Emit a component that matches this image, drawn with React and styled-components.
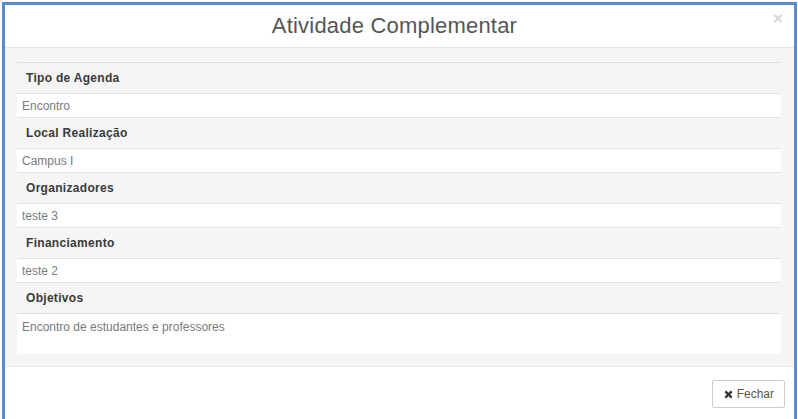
import styled, { createGlobalStyle } from "styled-components";

const Global = createGlobalStyle`
  html, body { margin: 0; padding: 0; background: #fff; }
  body { font-family: "Liberation Sans", Arial, sans-serif; }
`;

const Frame = styled.div`
  margin: 2px 1px 0 2px;
  height: 417px;
  box-sizing: border-box;
  border: 3px solid #5b8ad0;
  border-bottom: none;
  background: #fff;
  display: flex;
  flex-direction: column;
`;

const Header = styled.div`
  position: relative;
  height: 42px;
  padding-right: 10px;
  border-bottom: 1px solid #e5e5e5;
  display: flex;
  align-items: center;
  justify-content: center;
`;

const Title = styled.h4`
  margin: 0;
  font-size: 22px;
  font-weight: 400;
  color: #555;
  letter-spacing: 0.2px;
`;

const Close = styled.span`
  position: absolute;
  right: 11px;
  top: 4px;
  font-size: 17px;
  font-weight: 700;
  color: #d5d5d5;
`;

const Body = styled.div`
  background: #f5f5f5;
  padding: 14px 13px 12px 12px;
  border-bottom: 1px solid #e5e5e5;
`;

const Table = styled.div`
  border-top: 1px solid #e0e0e0;
`;

const Label = styled.div`
  height: 30px;
  display: flex;
  align-items: center;
  padding-left: 9px;
  font-size: 12px;
  font-weight: 700;
  color: #3a3a3a;
  border-bottom: 1px solid #e3e3e3;
  letter-spacing: 0.3px;
`;

const Value = styled.div`
  background: #fff;
  height: ${(p) => (p.$tall ? "40px" : "24px")};
  display: flex;
  align-items: ${(p) => (p.$tall ? "flex-start" : "center")};
  padding: ${(p) => (p.$tall ? "6px 0 0 5px" : "0 0 0 5px")};
  box-sizing: border-box;
  font-size: 12px;
  color: #7a7a7a;
  border-bottom: ${(p) => (p.$tall ? "none" : "1px solid #e3e3e3")};
`;

const Footer = styled.div`
  flex: 1;
  display: flex;
  justify-content: flex-end;
  align-items: flex-start;
  padding: 13px 9px 0 0;
`;

const Button = styled.button`
  display: flex;
  align-items: center;
  gap: 4px;
  height: 28px;
  padding: 0 10px 0 11px;
  background: #fff;
  border: 1px solid #ccc;
  border-radius: 2px;
  font-family: "Liberation Sans", Arial, sans-serif;
  font-size: 12px;
  color: #555;
  svg { width: 9px; height: 9px; }
`;

const rows = [
  ["Tipo de Agenda", "Encontro"],
  ["Local Realização", "Campus I"],
  ["Organizadores", "teste 3"],
  ["Financiamento", "teste 2"],
  ["Objetivos", "Encontro de estudantes e professores"],
];

export default function App() {
  return (
    <>
      <Global />
      <Frame>
        <Header>
          <Title>Atividade Complementar</Title>
          <Close>×</Close>
        </Header>
        <Body>
          <Table>
            {rows.map(([label, value], i) => (
              <div key={label}>
                <Label>{label}</Label>
                <Value $tall={i === rows.length - 1}>{value}</Value>
              </div>
            ))}
          </Table>
        </Body>
        <Footer>
          <Button>
            <svg viewBox="0 0 10 10">
              <path d="M1.5 1.5 L8.5 8.5 M8.5 1.5 L1.5 8.5" stroke="#333" strokeWidth="2.6" strokeLinecap="butt" />
            </svg>
            Fechar
          </Button>
        </Footer>
      </Frame>
    </>
  );
}
